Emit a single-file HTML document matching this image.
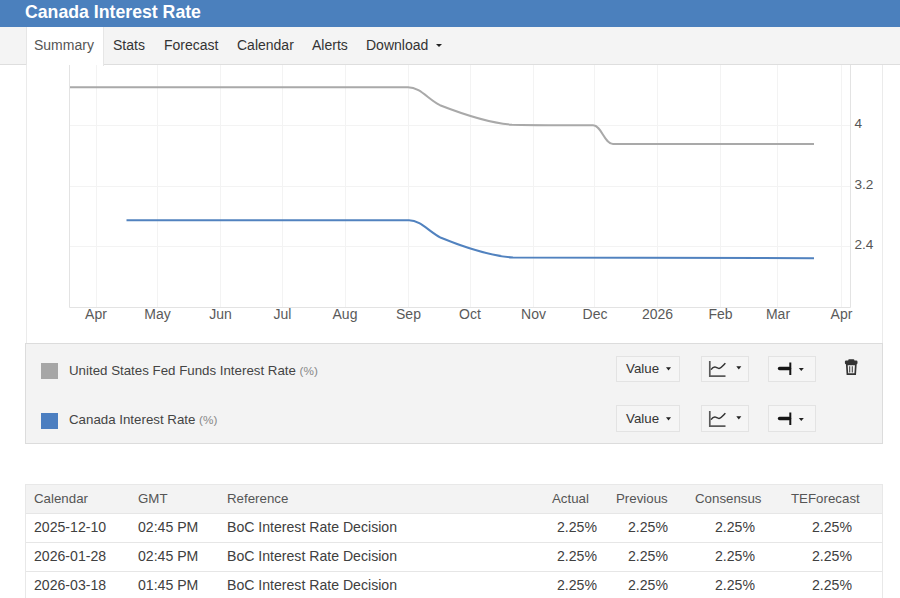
<!DOCTYPE html>
<html><head><meta charset="utf-8">
<style>
*{box-sizing:border-box;margin:0;padding:0}
html,body{width:900px;height:598px;overflow:hidden;background:#fff;font-family:"Liberation Sans",sans-serif;color:#333}
.abs{position:absolute}
#hdr{left:0;top:0;width:900px;height:27px;background:#4b80bd}
#hdr h1{position:absolute;left:25px;top:4px;font-size:17.7px;line-height:17px;font-weight:bold;color:#fff;white-space:nowrap}
#tabs{left:0;top:27px;width:900px;height:38px;background:#f4f4f4;border-bottom:1px solid #dedede}
.tab{position:absolute;top:0;height:37px;font-size:14px;line-height:14px;color:#333;white-space:nowrap}
.tab span{position:absolute;top:11px}
#t-sum{left:26px;width:78px;height:39px;background:#fff;border-left:1px solid #e6e6e6;border-right:1px solid #e6e6e6;color:#555}
.vline{position:absolute;width:1px;background:#ebebeb}
#legend{left:25px;top:343px;width:858px;height:101px;background:#f3f3f3;border:1px solid #dcdcdc}
.sw{position:absolute;width:17px;height:16px}
.ltxt{position:absolute;font-size:13.3px;line-height:13px;color:#444;white-space:nowrap}
.ltxt small{font-size:11.7px;color:#888}
.btn{position:absolute;height:27px;border:1px solid #e3e3e3;background:#f5f5f5}
.btn .t{position:absolute;font-size:13.3px;line-height:13px;color:#333}
.caret{position:absolute;width:0;height:0;border-left:2.5px solid transparent;border-right:2.5px solid transparent;border-top:3.5px solid #222}
#tbl{left:25px;top:484px;width:858px;height:120px;border:1px solid #e8e8e8;border-bottom:none}
.row{position:absolute;left:0;width:856px;border-bottom:1px solid #e6e6e6}
.cell{position:absolute;white-space:nowrap}
.hd .cell{font-size:13.3px;line-height:13px;color:#555}
.bd .cell{font-size:14.1px;line-height:14px;color:#404040}
</style></head><body>
<div id="hdr" class="abs"><h1>Canada Interest Rate</h1></div>
<div id="tabs" class="abs">
  <div class="tab" id="t-sum"><span style="left:7px">Summary</span></div>
  <div class="tab" style="left:113px"><span style="left:0">Stats</span></div>
  <div class="tab" style="left:164px"><span style="left:0">Forecast</span></div>
  <div class="tab" style="left:237px"><span style="left:0">Calendar</span></div>
  <div class="tab" style="left:312px"><span style="left:0">Alerts</span></div>
  <div class="tab" style="left:366px"><span style="left:0">Download</span></div>
  <div class="caret" style="left:436px;top:17px;border-left-width:3px;border-right-width:3px;border-top-width:3.5px"></div>
</div>
<div class="vline" style="left:26px;top:65px;height:279px"></div>
<div class="vline" style="left:882px;top:65px;height:279px"></div>

<svg class="abs" style="left:0;top:0" width="900" height="598" viewBox="0 0 900 598">
  <g stroke="#f3f3f3" stroke-width="1" fill="none">
    <path d="M96.5 65V307M157.5 65V307M220.5 65V307M282.5 65V307M345.5 65V307M408.5 65V307M470.5 65V307M533.5 65V307M594.5 65V307M657.5 65V307M720.5 65V307M777.5 65V307M841.5 65V307"/>
    <path d="M70 125.5H850M70 186.5H850M70 246.5H850"/>
  </g>
  <path d="M69.5 65V307.5H850.5V65" stroke="#e3e3e3" stroke-width="1" fill="none"/>
  <path d="M70 87.2H408C420 87.2 428 99 440 105.2C460 113 490 123 512 124.8C520 125.2 560 125.3 593 125.3C601.5 125.3 604.5 144 613 144H814" stroke="#a9a9a9" stroke-width="2" fill="none"/>
  <path d="M126.5 220.3H409C421 220.3 429 232 441 237.8C461 246 491 256 513 257.6C521 258.2 561 258.2 814 258.2" stroke="#5182bf" stroke-width="2" fill="none"/>
  <g font-family="Liberation Sans" font-size="14" fill="#5a5a5a" text-anchor="middle">
    <text x="96" y="319">Apr</text>
    <text x="157.5" y="319">May</text>
    <text x="220.5" y="319">Jun</text>
    <text x="282.5" y="319">Jul</text>
    <text x="345" y="319">Aug</text>
    <text x="408.5" y="319">Sep</text>
    <text x="470" y="319">Oct</text>
    <text x="533.5" y="319">Nov</text>
    <text x="595" y="319">Dec</text>
    <text x="657.5" y="319">2026</text>
    <text x="720.5" y="319">Feb</text>
    <text x="778" y="319">Mar</text>
    <text x="841.5" y="319">Apr</text>
  </g>
  <g font-family="Liberation Sans" font-size="13.6" fill="#555">
    <text x="854.5" y="128">4</text>
    <text x="854.5" y="189">3.2</text>
    <text x="854.5" y="249">2.4</text>
  </g>
</svg>

<div id="legend" class="abs">
  <div class="sw" style="left:15px;top:19px;background:#a6a6a6"></div>
  <div class="ltxt" style="left:43px;top:20px">United States Fed Funds Interest Rate <small>(%)</small></div>
  <div class="sw" style="left:15px;top:69px;height:16px;background:#4b7ec0"></div>
  <div class="ltxt" style="left:43px;top:69px">Canada Interest Rate <small>(%)</small></div>
  <div class="btn" style="left:590px;top:12px;height:26px;width:64px"><span class="t" style="left:9px;top:5px">Value</span></div>
  <div class="btn" style="left:675px;top:12px;height:26px;width:48px"></div>
  <div class="btn" style="left:742px;top:12px;height:26px;width:48px"></div>
  <div class="btn" style="left:590px;top:61px;width:64px"><span class="t" style="left:9px;top:6px">Value</span></div>
  <div class="btn" style="left:675px;top:61px;width:48px"></div>
  <div class="btn" style="left:742px;top:61px;width:48px"></div>
  <svg class="abs" style="left:0;top:0" width="856" height="99" viewBox="26 344 856 99">
    <defs>
      <g id="ctl">
        <path d="M666 367.2H671L668.5 370.4Z" fill="#222"/>
        <path d="M709.8 361V376.1H725.5" stroke="#5a5a5a" stroke-width="1.7" fill="none"/>
        <path d="M711 369.6C712.6 367.4 714 366.6 715.6 367.1C717 367.6 718 368.8 719.6 368.3C721.6 367.6 723.6 365 725.4 363.3" stroke="#333" stroke-width="1.5" fill="none"/>
        <path d="M736.3 366.3H741.3L738.8 369.5Z" fill="#222"/>
        <path d="M779.6 368.5H789.4" stroke="#151515" stroke-width="3.6" stroke-linecap="round"/>
        <rect x="789.3" y="362.5" width="2" height="12.5" fill="#151515"/>
        <path d="M798.8 367.9H803.8L801.3 371.1Z" fill="#222"/>
      </g>
    </defs>
    <use href="#ctl"/>
    <use href="#ctl" y="50"/>
    <g fill="#333">
      <rect x="844.9" y="360.6" width="12.6" height="3.6" rx="1.2"/>
      <rect x="848.2" y="359.3" width="6.2" height="2.4" rx="1"/>
    </g>
    <path d="M846.8 364.5H855.8L855.2 374.2H847.4Z" stroke="#333" stroke-width="1.7" fill="none"/>
    <path d="M849.7 366.3V372.6M852.3 366.3V372.6" stroke="#444" stroke-width="1.1"/>
  </svg>
</div>

<div id="tbl" class="abs">
  <div class="row hd" style="top:0;height:29px;background:#f3f3f3">
    <span class="cell" style="left:8px;top:7px">Calendar</span>
    <span class="cell" style="left:112px;top:7px">GMT</span>
    <span class="cell" style="left:201px;top:7px">Reference</span>
    <span class="cell" style="left:526px;top:7px">Actual</span>
    <span class="cell" style="left:590px;top:7px">Previous</span>
    <span class="cell" style="left:669px;top:7px">Consensus</span>
    <span class="cell" style="left:765px;top:7px">TEForecast</span>
  </div>
  <div class="row bd" style="top:29px;height:29px">
    <span class="cell" style="left:8px;top:6px">2025-12-10</span>
    <span class="cell" style="left:112px;top:6px">02:45 PM</span>
    <span class="cell" style="left:201px;top:6px">BoC Interest Rate Decision</span>
    <span class="cell" style="left:531px;top:6px">2.25%</span>
    <span class="cell" style="left:602px;top:6px">2.25%</span>
    <span class="cell" style="left:689px;top:6px">2.25%</span>
    <span class="cell" style="left:786px;top:6px">2.25%</span>
  </div>
  <div class="row bd" style="top:58px;height:29px">
    <span class="cell" style="left:8px;top:6px">2026-01-28</span>
    <span class="cell" style="left:112px;top:6px">02:45 PM</span>
    <span class="cell" style="left:201px;top:6px">BoC Interest Rate Decision</span>
    <span class="cell" style="left:531px;top:6px">2.25%</span>
    <span class="cell" style="left:602px;top:6px">2.25%</span>
    <span class="cell" style="left:689px;top:6px">2.25%</span>
    <span class="cell" style="left:786px;top:6px">2.25%</span>
  </div>
  <div class="row bd" style="top:87px;height:29px">
    <span class="cell" style="left:8px;top:6px">2026-03-18</span>
    <span class="cell" style="left:112px;top:6px">01:45 PM</span>
    <span class="cell" style="left:201px;top:6px">BoC Interest Rate Decision</span>
    <span class="cell" style="left:531px;top:6px">2.25%</span>
    <span class="cell" style="left:602px;top:6px">2.25%</span>
    <span class="cell" style="left:689px;top:6px">2.25%</span>
    <span class="cell" style="left:786px;top:6px">2.25%</span>
  </div>
</div>
</body></html>
